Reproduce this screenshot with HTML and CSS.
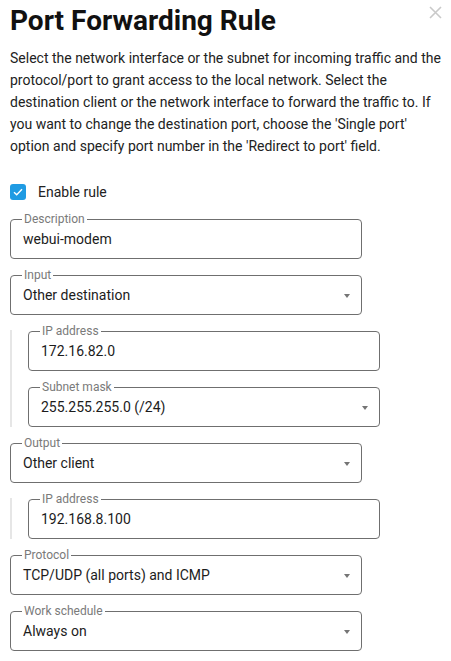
FILE: index.html
```html
<!DOCTYPE html>
<html lang="en">
<head>
<meta charset="utf-8">
<title>Port Forwarding Rule</title>
<link rel="stylesheet" href="styles.css">
</head>
<body>
<div class="dialog">
  <div class="header">
    <h1 class="title">Port Forwarding Rule</h1>
    <button class="close" aria-label="Close">
      <svg width="13" height="13" viewBox="0 0 13 13"><path d="M1 1L12 12M12 1L1 12" stroke="#c9c9c9" stroke-width="1.6" fill="none"/></svg>
    </button>
  </div>
  <p class="intro">Select the network interface or the subnet for incoming traffic and the protocol/port to grant access to the local network. Select the destination client or the network interface to forward the traffic to. If you want to change the destination port, choose the 'Single port' option and specify port number in the 'Redirect to port' field.</p>

  <label class="check-row">
    <span class="checkbox">
      <svg width="10" height="8" viewBox="0 0 10 8"><path d="M1 4.2L3.7 6.8L9 1.2" stroke="#fff" stroke-width="1.4" fill="none"/></svg>
    </span>
    <span class="check-label">Enable rule</span>
  </label>

  <div class="form">
    <fieldset class="field">
      <legend>Description</legend>
      <div class="value">webui-modem</div>
    </fieldset>

    <fieldset class="field">
      <legend>Input</legend>
      <div class="value select"><span>Other destination</span><span class="arrow"></span></div>
    </fieldset>

    <div class="group">
      <fieldset class="field">
        <legend>IP address</legend>
        <div class="value">172.16.82.0</div>
      </fieldset>
      <fieldset class="field">
        <legend>Subnet mask</legend>
        <div class="value select"><span>255.255.255.0 (/24)</span><span class="arrow"></span></div>
      </fieldset>
    </div>

    <fieldset class="field">
      <legend>Output</legend>
      <div class="value select"><span>Other client</span><span class="arrow"></span></div>
    </fieldset>

    <div class="group">
      <fieldset class="field">
        <legend>IP address</legend>
        <div class="value">192.168.8.100</div>
      </fieldset>
    </div>

    <fieldset class="field">
      <legend>Protocol</legend>
      <div class="value select"><span>TCP/UDP (all ports) and ICMP</span><span class="arrow"></span></div>
    </fieldset>

    <fieldset class="field">
      <legend>Work schedule</legend>
      <div class="value select"><span>Always on</span><span class="arrow"></span></div>
    </fieldset>
  </div>
</div>
</body>
</html>
```

FILE: styles.css
```css
* { box-sizing: border-box; }

html, body {
  margin: 0;
  padding: 0;
  background: #ffffff;
}

body {
  font-family: Roboto, "Liberation Sans", Arial, sans-serif;
  color: #222222;
}

.dialog {
  padding: 5px 9px 0 10px;
}

.header {
  display: flex;
  justify-content: space-between;
  align-items: flex-start;
}

.title {
  margin: 0;
  font-size: 28px;
  line-height: 32px;
  font-weight: 700;
  color: #111111;
}

.close {
  border: 0;
  background: none;
  padding: 0;
  margin-top: 1px;
  width: 13px;
  height: 13px;
  display: block;
  cursor: pointer;
}

.close svg { display: block; }

.intro {
  margin: 10px 0 0 0;
  font-size: 14px;
  line-height: 22px;
  color: #222222;
}

.check-row {
  display: flex;
  align-items: center;
  gap: 12px;
  margin-top: 27px;
  height: 16px;
}

.checkbox {
  width: 16px;
  height: 16px;
  border-radius: 3px;
  background: #1f9be3;
  display: flex;
  align-items: center;
  justify-content: center;
}

.checkbox svg { display: block; }

.check-label {
  font-size: 14px;
  color: #222222;
}

.form {
  margin-top: 13px;
  display: flex;
  flex-direction: column;
  gap: 10px;
}

.field {
  margin: 0;
  width: 352px;
  padding: 0 12px 7px 12px;
  border: 1px solid #6f6f6f;
  border-radius: 4px;
  min-width: 0;
}

.field legend {
  font-size: 12px;
  line-height: 12px;
  padding: 0 2px;
  margin-left: -1px;
  color: #7a7a7a;
}

.value {
  padding-top: 2px;
  font-size: 14px;
  line-height: 24px;
  color: #1c1c1c;
}

.select {
  display: flex;
  justify-content: space-between;
  align-items: center;
}

.arrow {
  width: 0;
  height: 0;
  border-left: 3px solid transparent;
  border-right: 3px solid transparent;
  border-top: 4px solid #757575;
  margin-right: -1px;
  margin-top: 1px;
}

.group {
  margin-top: 5px;
  border-left: 2px solid #e6e6e6;
  padding-left: 16px;
  display: flex;
  flex-direction: column;
  gap: 10px;
}

.group > .field:first-child {
  margin-top: -5px;
}
```
